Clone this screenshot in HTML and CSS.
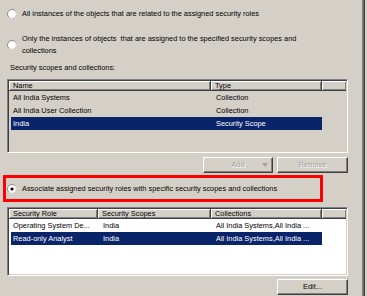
FILE: index.html
```html
<html>
	<head>
		<meta charset="utf-8" />
		<title>Security scopes</title>
		<link rel="stylesheet" href="styles.css">
	</head>
	<body>
		<div class="page">
			<div class="content">
				<div class="option option-first">
					<svg class="radio" width="10" height="10" viewBox="0 0 10 10"><circle cx="5" cy="5" r="4.5" fill="#fff" stroke="#8a8a8a"/><path d="M8.2 1.8 A4.5 4.5 0 0 1 1.8 8.2" fill="none" stroke="#e4e2dc"/></svg>
					<span>All instances of the objects that are related to the assigned security roles</span>
				</div>
				<div class="option option-second">
					<svg class="radio" width="10" height="10" viewBox="0 0 10 10"><circle cx="5" cy="5" r="4.5" fill="#fff" stroke="#8a8a8a"/><path d="M8.2 1.8 A4.5 4.5 0 0 1 1.8 8.2" fill="none" stroke="#e4e2dc"/></svg>
					<span>Only the instances of objects&nbsp; that are assigned to the specified security scopes and<br>collections</span>
				</div>
				<div class="caption">Security scopes and collections:</div>

				<div class="listview listview-disabled lv-scopes">
					<div class="lv-header">
						<div class="lv-col">Name</div>
						<div class="lv-col">Type</div>
						<div class="lv-col"></div>
					</div>
					<div class="lv-row">
						<div class="lv-cell">All India Systems</div>
						<div class="lv-cell">Collection</div>
					</div>
					<div class="lv-row">
						<div class="lv-cell">All India User Collection</div>
						<div class="lv-cell">Collection</div>
					</div>
					<div class="lv-row selected">
						<div class="lv-cell">India</div>
						<div class="lv-cell">Security Scope</div>
					</div>
				</div>

				<div class="buttons">
					<div class="btn btn-disabled btn-split">
						<span class="btn-label">Add</span>
						<span class="btn-arrow"></span>
					</div>
					<div class="btn btn-disabled">Remove</div>
				</div>

				<div class="highlight">
					<svg class="radio" width="10" height="10" viewBox="0 0 10 10"><circle cx="5" cy="5" r="4.5" fill="#fff" stroke="#8a8a8a"/><path d="M8.2 1.8 A4.5 4.5 0 0 1 1.8 8.2" fill="none" stroke="#e4e2dc"/><circle cx="5" cy="5" r="1.6" fill="#000"/></svg>
					<span>Associate assigned security roles with specific security scopes and collections</span>
				</div>

				<div class="listview lv-roles">
					<div class="lv-header">
						<div class="lv-col">Security Role</div>
						<div class="lv-col">Security Scopes</div>
						<div class="lv-col">Collections</div>
						<div class="lv-col"></div>
					</div>
					<div class="lv-row">
						<div class="lv-cell">Operating System De...</div>
						<div class="lv-cell">India</div>
						<div class="lv-cell">All India Systems,All India ...</div>
					</div>
					<div class="lv-row selected">
						<div class="lv-cell">Read-only Analyst</div>
						<div class="lv-cell">India</div>
						<div class="lv-cell">All India Systems,All India ...</div>
					</div>
				</div>

				<div class="buttons">
					<div class="btn">Edit...</div>
				</div>
			</div>
			<div class="frame"></div>
		</div>
	</body>
</html>
```

FILE: styles.css
```css
body { margin: 0; background-color: #d4d0c8; font-family: "Liberation Sans", Arial, sans-serif; font-size: 7.4px; color: #000000; overflow: hidden; }
.page { display: flex; height: 296px; }
.content { width: 362px; padding-left: 7px; box-sizing: border-box; display: flex; flex-direction: column; }
.frame { width: 1px; border-left: 1px solid #808080; border-right: 1px solid #404040; background: #6a6a6a; }

.option { display: flex; align-items: center; line-height: 12px; }
.option span { margin-left: 5px; }
.option-first { margin-top: 8px; }
.option-second { margin-top: 13px; }
.radio { flex: none; }

.caption { margin-top: 5px; margin-left: 3px; line-height: 12px; }

.listview {
	width: 341px;
	box-sizing: border-box;
	border: 1px solid;
	border-color: #808080 #ffffff #ffffff #808080;
	box-shadow: inset 1px 1px 0 #404040, inset -1px -1px 0 #d4d0c8;
	padding: 1px;
	background: #ffffff;
	margin-top: 5px;
}
.listview-disabled { background: #d4d0c8; }
.lv-scopes { height: 74px; }
.lv-roles { height: 69px; }

.lv-header { display: grid; height: 10px; line-height: 9px; }
.lv-scopes .lv-header { grid-template-columns: 202px 111px 1fr; }
.lv-roles .lv-header { grid-template-columns: 89px 113px 111px 1fr; }
.lv-col {
	background: #d4d0c8;
	border-right: 1px solid #404040;
	border-bottom: 1px solid #404040;
	box-shadow: inset 1px 1px 0 #ffffff, inset -1px -1px 0 #808080;
	padding-left: 4px;
	white-space: nowrap;
	overflow: hidden;
}
.lv-col:last-child { border-right: none; }

.lv-row { display: grid; height: 13px; line-height: 13px; margin-left: 2px; width: 311px; }
.lv-scopes .lv-row { grid-template-columns: 200px 111px; }
.lv-roles .lv-row { grid-template-columns: 87px 113px 111px; }
.lv-cell { padding-left: 2px; white-space: nowrap; overflow: hidden; }
.lv-cell + .lv-cell { padding-left: 5px; }
.lv-row.selected { background: #0a246a; color: #ffffff; }

.buttons { display: flex; justify-content: flex-end; gap: 4px; width: 341px; margin-top: 4px; }
.btn {
	width: 71px;
	height: 16px;
	box-sizing: border-box;
	border: 1px solid;
	border-color: #ffffff #404040 #404040 #ffffff;
	box-shadow: inset -1px -1px 0 #808080;
	text-align: center;
	line-height: 14px;
}
.btn-disabled { color: #a0a0a0; text-shadow: 1px 1px 0 #ffffff; }
.btn-split { width: 70px; position: relative; }
.btn-arrow { position: absolute; right: 4px; top: 5px; border-left: 3px solid transparent; border-right: 3px solid transparent; border-top: 4px solid #a0a0a0; }

.highlight {
	display: flex;
	align-items: center;
	width: 320px;
	height: 27px;
	box-sizing: border-box;
	margin-left: -4px;
	margin-top: 2px;
	border: 3px solid #ff0000;
	padding-left: 1px;
}
.highlight span { margin-left: 5px; }
.lv-roles { margin-top: 5px; }
.buttons:last-child { margin-top: 3px; }
```
